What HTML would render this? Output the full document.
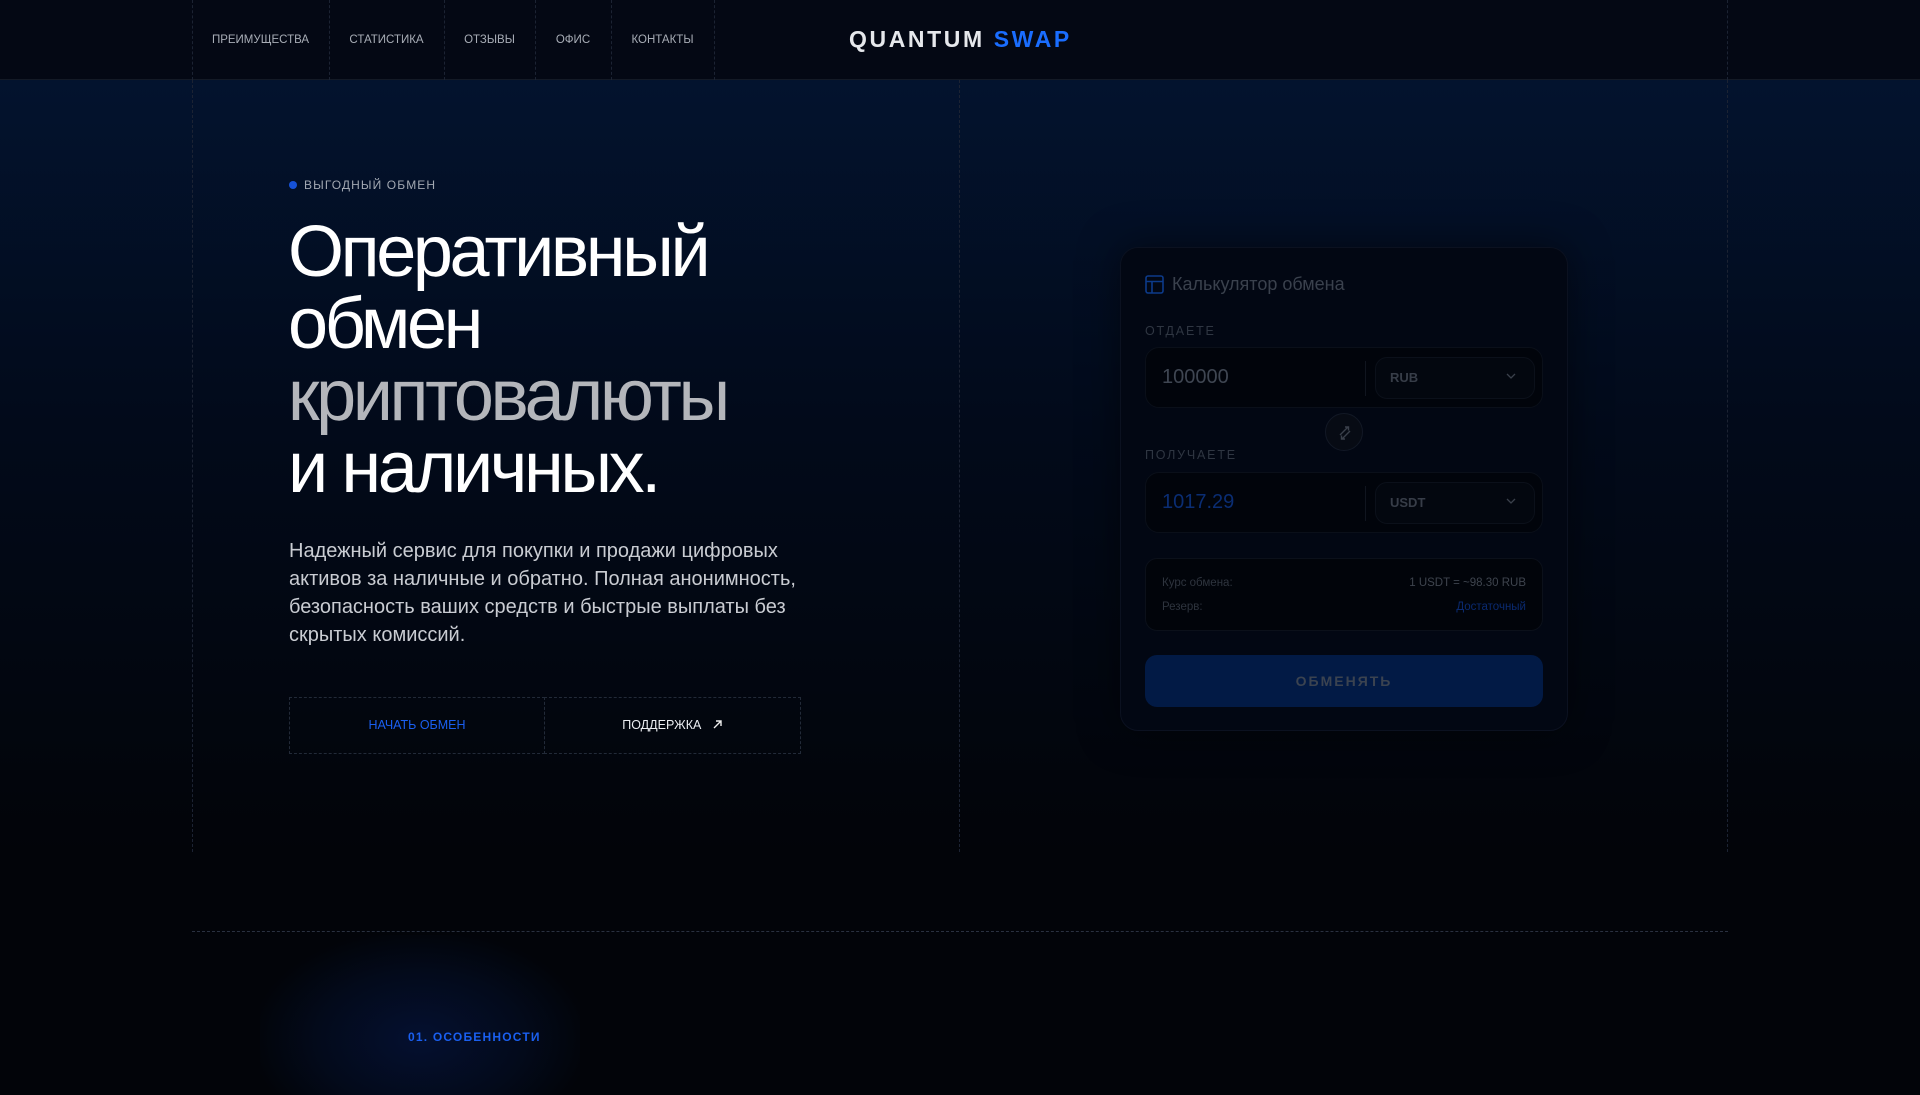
<!DOCTYPE html>
<html><head><meta charset="utf-8">
<style>
*{margin:0;padding:0;box-sizing:border-box}
html,body{width:1920px;height:1080px;overflow:hidden;background:#020409;font-family:"Liberation Sans",sans-serif}
.abs{position:absolute}
nav{position:absolute;left:0;top:0;width:1920px;height:80px;background:#040814;border-bottom:1px solid #141a26;z-index:2}
.vl{position:absolute;width:0;border-left:1px dashed #1c2333}
.navi{position:absolute;top:0;height:80px;line-height:80px;color:#a8adb6;font-size:11.5px;text-align:center}
.logo{position:absolute;left:849px;top:26px;font-size:23px;font-weight:bold;letter-spacing:2.6px;color:#e6e8ec;white-space:nowrap}
.logo span{color:#1a6dff}
.hero{position:absolute;left:0;top:80px;width:1920px;height:772px;background:linear-gradient(180deg,#03132e 0%,#020a1a 45%,#020409 100%)}
h1{position:absolute;left:288px;top:216px;font-size:72px;line-height:72px;font-weight:normal;color:#fff;letter-spacing:-3.4px}
h1 .g{color:#b4b6bb}
.p{position:absolute;left:289px;top:537px;width:520px;font-size:20px;line-height:28px;color:#c9ccd2}
.btn{position:absolute;top:697px;height:57px;border:1px dashed #222a38;line-height:55px;text-align:center;font-size:12.5px}
.card{position:absolute;left:1120px;top:247px;width:448px;height:484px;border-radius:18px;background:#020713;border:1px solid #0b1120;box-shadow:0 0 40px rgba(0,0,0,.5)}
.lbl{position:absolute;font-size:12.5px;letter-spacing:1.8px;color:#2f3642}
.inp{position:absolute;left:25px;width:398px;height:61px;border-radius:14px;border:1px solid #0a0f19;background:#01040b}
.sel{position:absolute;left:229px;top:9px;width:160px;height:42px;border-radius:12px;border:1px solid #0b101a;background:#03070f;font-size:13px;font-weight:bold;color:#373d48;line-height:40px;padding-left:14px}
.sel svg{position:absolute;right:18px;top:15px}
.div{position:absolute;left:219px;top:13px;height:35px;border-left:1px solid #10151f}
</style></head><body>
<div class="hero"></div>
<div class="abs" style="left:260px;top:935px;width:320px;height:160px;background:radial-gradient(ellipse at 50% 65%,#041030 0%,#030a1b 45%,rgba(2,4,9,0) 75%)"></div>
<nav>
<div class="vl" style="left:192px;top:0;height:80px"></div>
<div class="vl" style="left:329px;top:0;height:80px"></div>
<div class="vl" style="left:444px;top:0;height:80px"></div>
<div class="vl" style="left:535px;top:0;height:80px"></div>
<div class="vl" style="left:611px;top:0;height:80px"></div>
<div class="vl" style="left:714px;top:0;height:80px"></div>
<div class="vl" style="left:1727px;top:0;height:80px"></div>
<div class="navi" style="left:192px;width:137px">ПРЕИМУЩЕСТВА</div>
<div class="navi" style="left:329px;width:115px">СТАТИСТИКА</div>
<div class="navi" style="left:444px;width:91px">ОТЗЫВЫ</div>
<div class="navi" style="left:535px;width:76px">ОФИС</div>
<div class="navi" style="left:611px;width:103px">КОНТАКТЫ</div>
<div class="logo">QUANTUM <span>SWAP</span></div>
</nav>
<div class="vl" style="left:192px;top:80px;height:772px"></div>
<div class="vl" style="left:959px;top:80px;height:772px"></div>
<div class="vl" style="left:1727px;top:80px;height:772px"></div>
<div class="abs" style="left:192px;top:931px;width:1536px;border-top:1px dashed #2a3140"></div>

<div class="abs" style="left:289px;top:181px;width:8px;height:8px;border-radius:50%;background:#1652d8"></div>
<div class="abs" style="left:304px;top:178px;font-size:12px;letter-spacing:1.1px;color:#a2a8b2">ВЫГОДНЫЙ ОБМЕН</div>
<h1>Оперативный<br>обмен<br><span class="g">криптовалюты</span><br>и наличных.</h1>
<div class="p">Надежный сервис для покупки и продажи цифровых активов за наличные и обратно. Полная анонимность, безопасность ваших средств и быстрые выплаты без скрытых комиссий.</div>
<div class="btn" style="left:289px;width:256px;color:#1a5ff0">НАЧАТЬ ОБМЕН</div>
<div class="btn" style="left:544px;width:257px;color:#eceef2">ПОДДЕРЖКА &nbsp;&nbsp;<svg width="11" height="11" viewBox="0 0 11 11" style="vertical-align:-1px"><path d="M2 9L9 2M4 2H9V7" stroke="#eee" stroke-width="1.4" fill="none"/></svg></div>

<div class="card">
<svg class="abs" style="left:24px;top:27px" width="19" height="19" viewBox="0 0 19 19"><rect x="1" y="1" width="17" height="17" rx="2" fill="none" stroke="#0c3a8a" stroke-width="1.6"/><path d="M1 6.5H18M7 6.5V18" stroke="#0c3a8a" stroke-width="1.6"/></svg>
<div class="abs" style="left:51px;top:26px;font-size:18px;color:#3a414d">Калькулятор обмена</div>
<div class="lbl" style="left:24px;top:76px">ОТДАЕТЕ</div>
<div class="inp" style="top:99px;left:24px"><div class="abs" style="left:16px;top:18px;font-size:20px;color:#3f4652">100000</div><div class="div"></div><div class="sel">RUB<svg width="10" height="6" viewBox="0 0 10 6"><path d="M1 1L5 5L9 1" stroke="#3a404b" stroke-width="1.3" fill="none"/></svg></div></div>
<div class="abs" style="left:204px;top:165px;width:38px;height:38px;border-radius:50%;background:#070b14;border:1px solid #121825"><svg class="abs" style="left:10px;top:10px" width="18" height="18" viewBox="0 0 18 18"><path d="M4 11L12 3M9 3H12.5V6.5M14 7L6 15M9 15H5.5V11.5" stroke="#3a404b" stroke-width="1.4" fill="none"/></svg></div>
<div class="lbl" style="left:24px;top:200px">ПОЛУЧАЕТЕ</div>
<div class="inp" style="top:224px;left:24px"><div class="abs" style="left:16px;top:18px;font-size:20px;color:#0a2d73">1017.29</div><div class="div"></div><div class="sel">USDT<svg width="10" height="6" viewBox="0 0 10 6"><path d="M1 1L5 5L9 1" stroke="#3a404b" stroke-width="1.3" fill="none"/></svg></div></div>
<div class="abs" style="left:24px;top:310px;width:398px;height:73px;border-radius:12px;border:1px solid #0b101a;background:#01040a;font-size:11.5px">
<div class="abs" style="left:16px;top:18px;color:#2e343e">Курс обмена:</div>
<div class="abs" style="right:16px;top:18px;color:#3e444e">1 USDT = ~98.30 RUB</div>
<div class="abs" style="left:16px;top:42px;color:#2e343e">Резерв:</div>
<div class="abs" style="right:16px;top:42px;color:#0a2a70">Достаточный</div>
</div>
<div class="abs" style="left:24px;top:407px;width:398px;height:52px;border-radius:12px;background:#021a45;text-align:center;line-height:52px;font-size:14px;font-weight:bold;letter-spacing:2px;color:#3b4350">ОБМЕНЯТЬ</div>
</div>

<div class="abs" style="left:408px;top:1030px;font-size:12px;font-weight:bold;letter-spacing:1.2px;color:#1a5ff0">01. ОСОБЕННОСТИ</div>
</body></html>
